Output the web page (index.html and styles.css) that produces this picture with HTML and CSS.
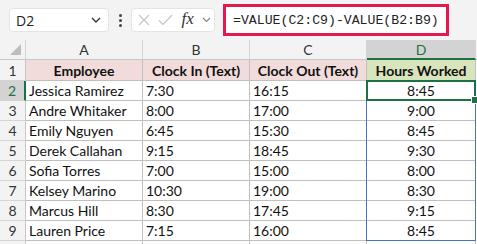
FILE: index.html
```html
<!DOCTYPE html>
<html>
<head>
<meta charset="utf-8">
<link rel="stylesheet" href="styles.css">
</head>
<body>
<div class="toolbar">
  <div class="namebox">
    <span class="nb-text">D2</span>
    <svg class="chev" width="10" height="6" viewBox="0 0 10 6"><path d="M1 1 L5 5 L9 1" fill="none" stroke="#333" stroke-width="1.3"/></svg>
  </div>
  <div class="dots"><span></span><span></span><span></span></div>
  <div class="fxbox">
    <svg width="12" height="12" viewBox="0 0 12 12"><path d="M1 1 L11 11 M11 1 L1 11" stroke="#c4c4c4" stroke-width="1.2"/></svg>
    <svg width="15" height="12" viewBox="0 0 15 12"><path d="M1 6.5 L5 10.5 L14 1" fill="none" stroke="#c4c4c4" stroke-width="1.2"/></svg>
    <span class="fx">fx</span>
    <svg width="9" height="6" viewBox="0 0 9 6"><path d="M1 1 L4.5 4.5 L8 1" fill="none" stroke="#888" stroke-width="1.2"/></svg>
  </div>
  <div class="formula">
    <div class="formula-box">=VALUE(C2:C9)-VALUE(B2:B9)</div>
  </div>
</div>
<div class="sheet">
  <div class="ch corner"><span class="tri"></span></div>
  <div class="ch">A</div>
  <div class="ch">B</div>
  <div class="ch">C</div>
  <div class="ch sel">D</div>
  <div class="ch blank"></div>

  <div class="rh">1</div>
  <div class="c hd pink">Employee</div>
  <div class="c hd pink">Clock In (Text)</div>
  <div class="c hd pink">Clock Out (Text)</div>
  <div class="c hd green">Hours Worked</div>
  <div class="c blank"></div>

  <div class="rh selr">2</div>
  <div class="c">Jessica Ramirez</div>
  <div class="c">7:30</div>
  <div class="c">16:15</div>
  <div class="c ctr">8:45</div>
  <div class="c blank"></div>

  <div class="rh">3</div>
  <div class="c">Andre Whitaker</div>
  <div class="c">8:00</div>
  <div class="c">17:00</div>
  <div class="c ctr">9:00</div>
  <div class="c blank"></div>

  <div class="rh">4</div>
  <div class="c">Emily Nguyen</div>
  <div class="c">6:45</div>
  <div class="c">15:30</div>
  <div class="c ctr">8:45</div>
  <div class="c blank"></div>

  <div class="rh">5</div>
  <div class="c">Derek Callahan</div>
  <div class="c">9:15</div>
  <div class="c">18:45</div>
  <div class="c ctr">9:30</div>
  <div class="c blank"></div>

  <div class="rh">6</div>
  <div class="c">Sofia Torres</div>
  <div class="c">7:00</div>
  <div class="c">15:00</div>
  <div class="c ctr">8:00</div>
  <div class="c blank"></div>

  <div class="rh">7</div>
  <div class="c">Kelsey Marino</div>
  <div class="c">10:30</div>
  <div class="c">19:00</div>
  <div class="c ctr">8:30</div>
  <div class="c blank"></div>

  <div class="rh">8</div>
  <div class="c">Marcus Hill</div>
  <div class="c">8:30</div>
  <div class="c">17:45</div>
  <div class="c ctr">9:15</div>
  <div class="c blank"></div>

  <div class="rh">9</div>
  <div class="c">Lauren Price</div>
  <div class="c">7:15</div>
  <div class="c">16:00</div>
  <div class="c ctr">8:45</div>
  <div class="c blank"></div>

  <div class="rh last"></div>
  <div class="c last"></div>
  <div class="c last"></div>
  <div class="c last"></div>
  <div class="c last"></div>
  <div class="c blank last"></div>

  <div class="range"></div>
  <div class="active"><span class="handle"></span></div>
</div>
</body>
</html>
```

FILE: styles.css
```css
* { box-sizing: border-box; }
html, body { margin: 0; padding: 0; }
body {
  width: 477px;
  height: 244px;
  overflow: hidden;
  background: #ffffff;
  font-family: "Open Sans", "Noto Sans", sans-serif;
}
.toolbar {
  height: 40px;
  background: #f3f3f3;
  display: flex;
  align-items: center;
  padding-left: 9px;
}
.namebox {
  width: 100px;
  height: 24px;
  background: #fff;
  border-radius: 4px;
  border: 1px solid #e4e4e4;
  display: flex;
  align-items: center;
  justify-content: space-between;
  padding: 0 7px 0 6px;
}
.nb-text {
  font-size: 14px;
  color: #222;
}
.dots {
  width: 22px;
  display: flex;
  flex-direction: column;
  align-items: center;
  gap: 2px;
}
.dots span {
  width: 3px;
  height: 3px;
  border-radius: 50%;
  background: #444;
}
.fxbox {
  width: 84px;
  height: 24px;
  background: #fff;
  border-radius: 4px;
  border: 1px solid #e4e4e4;
  display: flex;
  align-items: center;
  justify-content: space-between;
  padding: 0 3px 0 6px;
}
.fx {
  font-family: "Liberation Serif", serif;
  font-style: italic;
  font-size: 17px;
  color: #333;
  line-height: 1;
  margin-top: -3px;
}
.formula {
  flex: 1;
  height: 40px;
  display: flex;
  align-items: center;
  padding-left: 8px;
}
.formula-box {
  width: 226px;
  height: 32px;
  border: 3px solid #e5194d;
  background: #fff;
  font-family: "Liberation Mono", monospace;
  font-size: 13.2px;
  color: #222;
  display: flex;
  align-items: center;
  padding-left: 7px;
  white-space: nowrap;
}
.sheet {
  position: relative;
  display: grid;
  grid-template-columns: 26px 117px 107px 117px 109px 1fr;
  grid-template-rows: 20px 21px repeat(8, 20px) 1fr;
  height: 204px;
  font-family: "Lato", "Liberation Sans", sans-serif;
}
.ch {
  background: #f3f3f3;
  border-right: 1px solid #d5d5d5;
  border-bottom: 1px solid #c6c6c6;
  font-size: 14px;
  color: #333;
  display: flex;
  align-items: center;
  justify-content: center;
}
.ch.corner {
  align-items: flex-end;
  justify-content: flex-end;
  padding: 0 4px 4px 0;
}
.tri {
  width: 11px;
  height: 11px;
  background: #bdbdbd;
  clip-path: polygon(100% 0, 100% 100%, 0 100%);
}
.ch.sel {
  background: #d3d3d3;
  color: #1e7145;
  border-bottom: 2px solid #1e7145;
}
.ch.blank { border-right: none; }
.rh {
  background: #f3f3f3;
  border-right: 1px solid #c6c6c6;
  border-bottom: 1px solid #d5d5d5;
  font-size: 14px;
  color: #333;
  display: flex;
  align-items: center;
  justify-content: center;
}
.rh.selr {
  background: #d3d3d3;
  color: #1e7145;
  border-right: 2px solid #1e7145;
}
.c {
  border-right: 1px solid #bfbfbf;
  border-bottom: 1px solid #bfbfbf;
  font-size: 14px;
  color: #111;
  display: flex;
  align-items: center;
  padding-left: 3px;
  white-space: nowrap;
  overflow: hidden;
}
.c.blank {
  border-right: none;
  border-bottom: none;
}
.c.last, .rh.last { border-bottom: none; }
.c.hd {
  font-weight: 700;
  justify-content: center;
  padding-left: 0;
}
.pink { background: #f2dcdb; }
.green { background: #d8e4bc; }
.c.ctr {
  justify-content: center;
  padding-left: 0;
}
.range {
  position: absolute;
  left: 366px;
  top: 40px;
  width: 110px;
  height: 161px;
  border: 1px solid #4472c4;
  pointer-events: none;
}
.active {
  position: absolute;
  left: 366px;
  top: 40px;
  width: 110px;
  height: 21px;
  border: 2px solid #1e7145;
}
.handle {
  position: absolute;
  right: -4px;
  bottom: -4px;
  width: 6px;
  height: 6px;
  background: #1e7145;
  outline: 1px solid #fff;
}
```
